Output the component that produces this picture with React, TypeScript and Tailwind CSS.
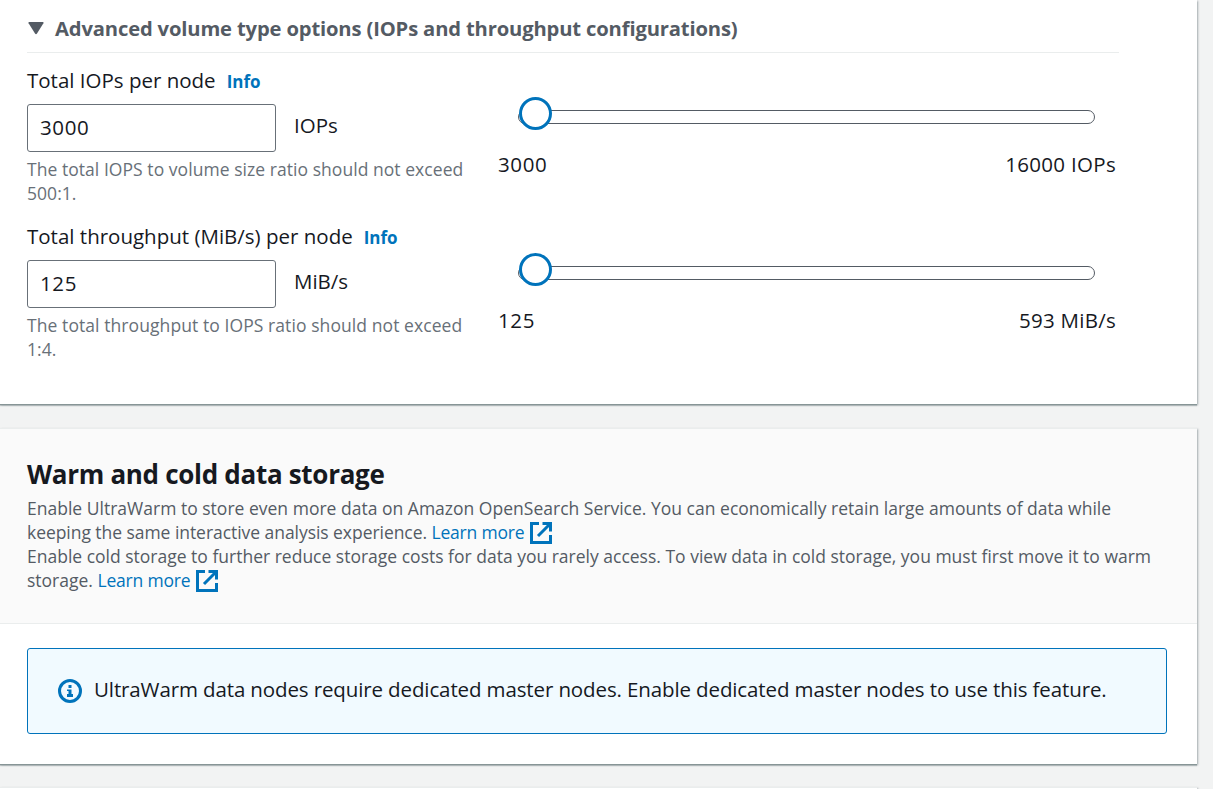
import type { ReactNode } from "react";

function InfoLink() {
  return (
    <a href="#" className="ml-[11px] pt-[2px] text-[17px] font-bold text-[#0073bb]">
      Info
    </a>
  );
}

function ExternalIcon() {
  return (
    <svg viewBox="0 0 22 22" className="ml-[6px] inline-block h-[22px] w-[22px] align-[-5px]" fill="none" stroke="#0073bb" strokeWidth="3">
      <path d="M9 1.5H1.5V20.5H20.5V13" />
      <path d="M12.5 1.5H20.5V9.5M20.2 1.8L8 14" />
    </svg>
  );
}

function Slider({ min, max, minClass, maxClass }: { min: string; max: string; minClass: string; maxClass: string }) {
  return (
    <div className="w-[620px] pt-[42px]">
      <div className="relative ml-[21px] h-[14px] w-[577px] rounded-full border border-[#545b64] bg-white">
        <div className="absolute -top-[14px] left-0 h-[33px] w-[33px] rounded-full border-[3px] border-[#0073bb] bg-white" />
      </div>
      <div className="mt-6 flex h-[32px] items-center justify-between pl-px pr-px">
        <span className={minClass}>{min}</span>
        <span className={maxClass}>{max}</span>
      </div>
    </div>
  );
}

function Setting({ label, value, unit, hint, hintClass, slider }: { label: string; value: string; unit: string; hint: ReactNode; hintClass: string; slider: ReactNode }) {
  return (
    <div className="flex h-[156px]">
      <div className="w-[470px] shrink-0">
        <div className="flex h-[36px] items-start leading-6">
          <span>{label}</span>
          <InfoLink />
        </div>
        <div className="flex items-center">
          <input
            defaultValue={value}
            className="h-[48px] w-[249px] rounded-[3px] border border-[#687078] bg-white px-3 pb-[2px] tracking-[0.6px] outline-none"
          />
          <span className="ml-[18px] pb-[6px]">{unit}</span>
        </div>
        <p className={"mt-[5px] text-[17.5px] leading-6 text-[#687078] " + hintClass}>{hint}</p>
      </div>
      <div className="shrink-0">{slider}</div>
    </div>
  );
}

const panel =
  "w-[1197px] bg-white shadow-[0_1px_0_0_#879596,0_2px_1px_0_rgba(0,28,36,0.2),1px_1px_2px_0_rgba(0,28,36,0.3)]";

export default function App() {
  return (
    <div className="h-[789px] w-[1213px] overflow-hidden bg-[#f2f3f3] font-['Open_Sans','Noto_Sans',sans-serif] text-[20.5px] text-[#16191f]">
      <section className={panel + " h-[404px] pl-[27px]"}>
        <div className="flex h-[53px] w-[1092px] items-center border-b border-[#eaeded] pt-1 font-bold text-[#545b64]">
          <svg viewBox="0 0 16 13" className="ml-px mr-[11px] h-[13px] w-4" fill="#545b64">
            <path d="M1.2 0H14.8Q16 0 15.4 1.2L9 11.5Q8 13 7 11.5L.6 1.2Q0 0 1.2 0Z" />
          </svg>
          <h3 className="whitespace-nowrap text-[20.2px] tracking-[-0.15px]">Advanced volume type options (IOPs and throughput configurations)</h3>
        </div>
        <div className="pt-[15px]">
          <Setting
            label="Total IOPs per node"
            value="3000"
            unit="IOPs"
            hint={<>The total IOPS to volume size ratio should not exceed<br />500:1.</>}
            hintClass="tracking-[0.05px]"
            slider={<Slider min="3000" max="16000 IOPs" minClass="tracking-[0.6px]" maxClass="tracking-[0.3px]" />}
          />
          <Setting
            label="Total throughput (MiB/s) per node"
            value="125"
            unit="MiB/s"
            hint={<>The total throughput to IOPS ratio should not exceed<br />1:4.</>}
            hintClass="tracking-[0.08px]"
            slider={<Slider min="125" max="593 MiB/s" minClass="tracking-[0.6px]" maxClass="tracking-[0.25px]" />}
          />
        </div>
      </section>

      <section className={panel + " mt-6 h-[336px] border-t border-[#eaeded]"}>
        <header className="h-[195px] border-b border-[#eaeded] bg-[#fafafa] pl-[27px] pt-[27px]">
          <h2 className="h-10 text-[26px] font-bold leading-[36px] tracking-[-0.3px]">Warm and cold data storage</h2>
          <div className="whitespace-nowrap text-[17.5px] leading-6 text-[#545b64]">
            <p className="h-6 tracking-[0.01px]">
              Enable UltraWarm to store even more data on Amazon OpenSearch Service. You can economically retain large amounts of data while
            </p>
            <p className="h-6">
              <span className="tracking-[-0.05px]">keeping the same interactive analysis experience. </span>
              <a href="#" className="tracking-[-0.2px] text-[#0073bb]">Learn more</a>
              <ExternalIcon />
            </p>
            <p className="h-6">
              Enable cold storage to further reduce storage costs for data you rarely access. To view data in cold storage, you must first move it to warm
            </p>
            <p className="h-6">
              storage. <a href="#" className="tracking-[-0.18px] text-[#0073bb]">Learn more</a>
              <ExternalIcon />
            </p>
          </div>
        </header>
        <div className="pl-[27px] pt-6">
          <div className="flex h-[86px] w-[1140px] items-center rounded-[3px] border border-[#0073bb] bg-[#f1faff] pl-[30px]">
            <svg viewBox="0 0 24 24" className="h-6 w-6 shrink-0" fill="none">
              <circle cx="12" cy="12" r="10.5" stroke="#0073bb" strokeWidth="3" />
              <path d="M10.5 6H13.5V9H10.5ZM9 10.5H13.5V15H15V18H9V15H10.5V12H9Z" fill="#0073bb" />
            </svg>
            <p className="ml-3 whitespace-nowrap pb-1 tracking-[-0.12px]">
              UltraWarm data nodes require dedicated master nodes. Enable dedicated master nodes to use this feature.
            </p>
          </div>
        </div>
      </section>
      <section className={panel + " mt-[23px] h-6 border-t border-[#eaeded]"} />
    </div>
  );
}
